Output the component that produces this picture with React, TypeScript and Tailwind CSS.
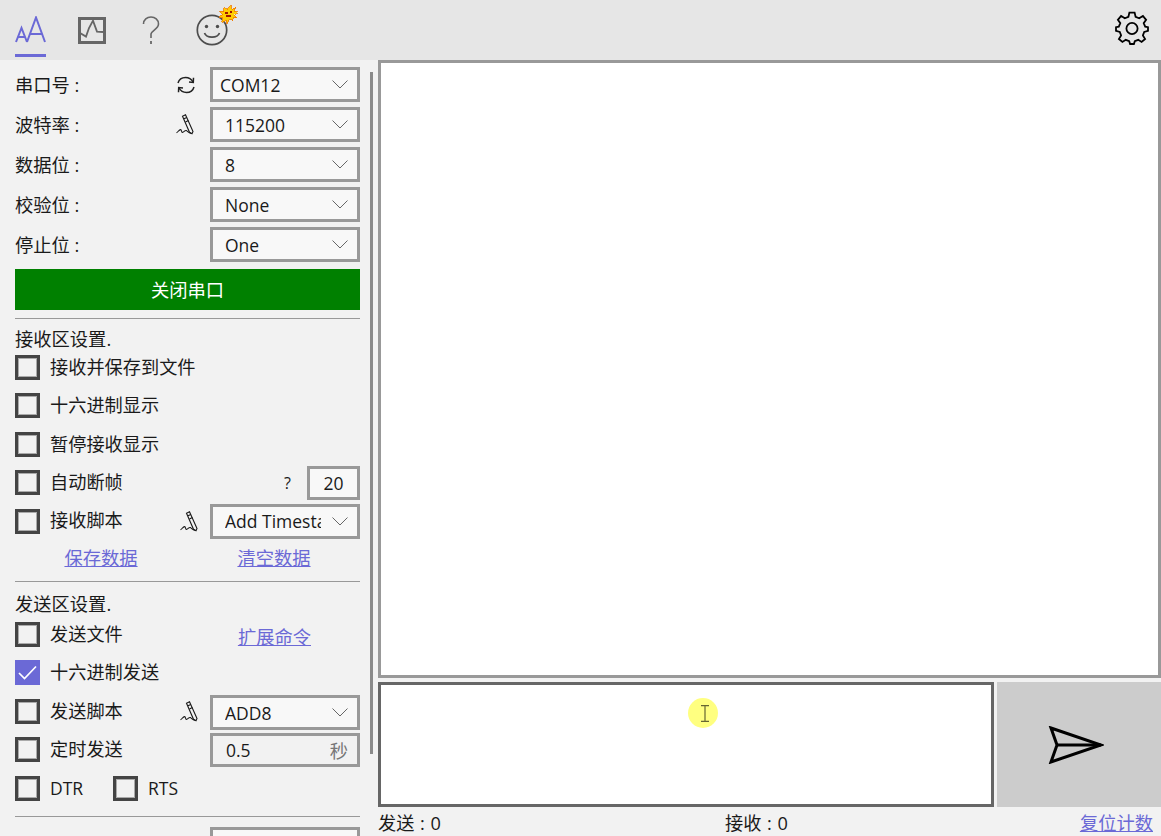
import React from "react";

const FONT = { fontFamily: '"Open Sans","Noto Sans CJK SC",sans-serif' };

function Chevron() {
  return (
    <svg width="16" height="9" viewBox="0 0 16 9" className="shrink-0" fill="none" stroke="#666" strokeWidth="1">
      <path d="M0.5 0.5 L8 8 L15.5 0.5" />
    </svg>
  );
}

function Pen() {
  return (
    <svg width="18" height="21" viewBox="0 0 18 21" fill="none" stroke="#1a1a1a" strokeWidth="1.1" className="shrink-0">
      <path d="M6.5 2.2 L9.5 0.8 L17 17.5 L16 19.8 L13.5 18.3 Z" />
      <path d="M8 4.8 L10.8 3.4 M9.5 8 L12.4 6.6" />
      <path d="M0.5 18.8 C2 18 3 15.8 4.5 15.6 C6 15.4 5 18.6 6.5 18.4 C8 18.1 9 15.8 10.5 16.6 C11.5 17.2 12.5 19 15.5 19.5" />
    </svg>
  );
}

function Refresh() {
  return (
    <svg width="20" height="20" viewBox="0 0 20 20" fill="none" stroke="#222" strokeWidth="1.5" className="shrink-0">
      <path d="M2 8 C3 4.5 6 2.5 9.5 2.5 C13 2.5 15.5 4.2 17 7" />
      <path d="M17.5 2.8 L17.3 7.4 L13 7" />
      <path d="M18 12 C17 15.5 14 17.5 10.5 17.5 C7 17.5 4.5 15.8 3 13" />
      <path d="M2.5 17.2 L2.7 12.6 L7 13" />
    </svg>
  );
}

function Select({ value, wide, pad = "pl-[12px]" }: { value: string; wide?: boolean; pad?: string }) {
  return (
    <div className={`w-[150px] h-[35px] shrink-0 border-[3px] border-[#999999] bg-[#f8f8f8] flex items-center ${pad} pr-[9px]`}>
      <span className={`${wide ? "w-[96px]" : "flex-1"} overflow-hidden whitespace-nowrap text-[17.5px] leading-[24px] text-[#1a1a1a]`}>{value}</span>
      {wide ? <span className="flex-1" /> : null}
      <Chevron />
    </div>
  );
}

function FieldRow({ label, icon, value, pad, iconGap = "mr-[14px]" }: { label: string; icon?: React.ReactNode; value: string; pad?: string; iconGap?: string }) {
  return (
    <div className="flex items-center h-[35px]">
      <span className="text-[18.3px] text-[#1a1a1a] whitespace-pre">{label}</span>
      <span className="flex-1" />
      <span className={`${iconGap} flex items-center`}>{icon}</span>
      <Select value={value} pad={pad} />
    </div>
  );
}

function Box({ checked }: { checked?: boolean }) {
  if (checked) {
    return (
      <span className="w-[25px] h-[25px] shrink-0 bg-[#6b69d6] flex items-center justify-center">
        <svg width="19" height="15" viewBox="0 0 19 15" fill="none" stroke="#fff" strokeWidth="1.7">
          <path d="M1 8 L6.5 13.5 L18 1.5" />
        </svg>
      </span>
    );
  }
  return <span className="w-[25px] h-[25px] shrink-0 border-[3px] border-[#444444] shadow-[inset_0_0_0_1px_#aaaaaa] bg-[#f2f2f2]" />;
}

function Check({ label, checked, children }: { label: string; checked?: boolean; children?: React.ReactNode }) {
  return (
    <div className="flex items-center h-[25px]">
      <Box checked={checked} />
      <span className="ml-[10px] text-[18.2px] text-[#1a1a1a] whitespace-nowrap">{label}</span>
      <span className="flex-1" />
      {children}
    </div>
  );
}

function Link({ children, className = "" }: { children: React.ReactNode; className?: string }) {
  return <a className={`text-[18.3px] text-[#6b69d6] underline whitespace-nowrap ${className}`}>{children}</a>;
}

function TopBar() {
  return (
    <div className="h-[60px] bg-[#e6e6e6] flex items-start relative shrink-0">
      <div className="ml-[15px] w-[31px] h-[57px] border-b-[3px] border-[#6b69d6] pt-[16px]">
        <svg width="31" height="28" viewBox="0 0 31 28" fill="none" stroke="#6b69d6" strokeWidth="2">
          <path d="M1 26 L6.5 12 L12 26 M3.2 21 H10" />
          <path d="M12 26 L21 1.5 L30 26 M15.5 18 H27" />
        </svg>
      </div>
      <svg width="28" height="27" viewBox="0 0 28 27" fill="none" className="ml-[32px] mt-[17px]">
        <rect x="1.5" y="1.5" width="25" height="24" stroke="#666" strokeWidth="3" />
        <path d="M2 16 L8 19.6 L11 11 L15 3.6 L19 14.6 L25 15" stroke="#666" strokeWidth="1.8" />
      </svg>
      <svg width="18" height="30" viewBox="0 0 18 30" fill="none" stroke="#666" strokeWidth="1.6" className="ml-[36px] mt-[16px]">
        <path d="M1.5 8 C1.5 3.5 5 1 9 1 C13 1 16.5 3.5 16.5 8 C16.5 13 10 14 9 18 L9 22" />
        <path d="M9 25 V28" strokeWidth="1.8" />
      </svg>
      <div className="ml-[36px] mt-[14px] relative w-[32px] h-[32px]">
        <svg width="32" height="32" viewBox="0 0 32 32" fill="none" stroke="#4d4d4d" strokeWidth="1.7">
          <circle cx="16" cy="16" r="14.7" />
          <circle cx="10.5" cy="12.5" r="1.7" fill="#4d4d4d" stroke="none" />
          <circle cx="21.5" cy="12.5" r="1.7" fill="#4d4d4d" stroke="none" />
          <path d="M8.5 19 C10.5 24.5 21.5 24.5 23.5 19" />
        </svg>
        <svg width="19" height="19" viewBox="0 0 19 19" className="absolute left-[23px] top-[-9px]" shapeRendering="crispEdges">
          <path d="M12 0 L12.5 4 L17 2 L15 6 L19 7 L15.5 9.5 L18 13 L14 12.5 L13.5 16 L10.5 14 L8 19 L7 15 L2.5 17 L4 13 L0 12 L3.5 9.5 L0.5 6 L5 6.5 L4.5 2.5 L8 4.5 Z" fill="#ffcc00" stroke="#f07800" strokeWidth="0.8" />
          <path d="M6 8 H9 M11 7 H13 M7 11 H12" stroke="#a01800" strokeWidth="1.3" />
        </svg>
      </div>
      <span className="flex-1" />
      <svg width="34" height="34" viewBox="0 0 34 34" fill="none" stroke="#000" strokeWidth="1.8" className="mr-[12px] mt-[11px]">
        <path d="M14.4 1.6 H19.6 L20.6 5.8 L24.2 7.3 L27.9 5 L31.1 8.8 L28.7 12.1 L30.2 15.6 L33 16.2 V19.8 L29.2 21 L27.9 24.4 L30.1 28 L26.6 31 L23.2 28.8 L19.8 30.2 L18.9 33 H15.1 L14.2 30.2 L10.8 28.8 L7.4 31 L3.9 28 L6.1 24.4 L4.8 21 L1 19.8 V16.2 L3.8 15.6 L5.3 12.1 L2.9 8.8 L6.1 5 L9.8 7.3 L13.4 5.8 Z" />
        <circle cx="17" cy="17.5" r="5.6" />
      </svg>
    </div>
  );
}

function Sidebar() {
  return (
    <div className="w-[375px] shrink-0 relative overflow-hidden pl-[15px] pr-[15px]">
      <div className="flex flex-col gap-[5px] pt-[7px]">
        <FieldRow label="串口号 :" icon={<Refresh />} value="COM12" pad="pl-[7px]" />
        <FieldRow label="波特率 :" icon={<Pen />} value="115200" iconGap="mr-[16px]" />
        <FieldRow label="数据位 :" value="8" />
        <FieldRow label="校验位 :" value="None" />
        <FieldRow label="停止位 :" value="One" />
      </div>
      <div className="mt-[7px] h-[41px] pt-[1px] bg-[#008000] text-white text-[18.3px] flex items-center justify-center">关闭串口</div>
      <div className="mt-[8px] h-px bg-[#999999]" />
      <div className="mt-[9px] h-[22px] text-[18.3px] leading-[22px] text-[#1a1a1a]">接收区设置.</div>
      <div className="mt-[5px] flex flex-col gap-[13.4px]">
        <Check label="接收并保存到文件" />
        <Check label="十六进制显示" />
        <Check label="暂停接收显示" />
        <Check label="自动断帧">
          <span className="text-[16px] text-[#1a1a1a] mr-[16px]">?</span>
          <span className="w-[53px] h-[34px] border-[3px] border-[#999999] bg-[#f8f8f8] flex items-center justify-center text-[17.5px] text-[#1a1a1a]">20</span>
        </Check>
        <Check label="接收脚本">
          <span className="mr-[12px] flex"><Pen /></span>
          <Select value="Add Timestamp" wide />
        </Check>
      </div>
      <div className="mt-[11px] h-[26px] flex items-center">
        <span className="w-[173px] text-center"><Link className="mr-[1px]">保存数据</Link></span>
        <span className="w-[172px] text-center"><Link>清空数据</Link></span>
      </div>
      <div className="mt-[10px] h-px bg-[#999999]" />
      <div className="mt-[11px] h-[22px] text-[18.3px] leading-[22px] text-[#1a1a1a]">发送区设置.</div>
      <div className="mt-[7.5px] flex flex-col gap-[13.4px]">
        <Check label="发送文件">
          <Link className="mr-[49px] mt-[4px]">扩展命令</Link>
        </Check>
        <Check label="十六进制发送" checked />
        <Check label="发送脚本">
          <span className="mr-[12px] flex"><Pen /></span>
          <div className="mt-[3px]"><Select value="ADD8" /></div>
        </Check>
        <Check label="定时发送">
          <div className="w-[150px] h-[34px] mt-[1px] border-[3px] border-[#999999] bg-[#f2f2f2] flex items-center pl-[13px] pr-[9px] text-[17.5px] text-[#1a1a1a]">
            <span className="flex-1">0.5</span>
            <span className="text-[#777777] text-[18.3px]">秒</span>
          </div>
        </Check>
        <div className="flex items-center h-[25px]">
          <Box />
          <span className="ml-[10px] w-[63px] text-[17.5px] text-[#1a1a1a]">DTR</span>
          <Box />
          <span className="ml-[10px] text-[17.5px] text-[#1a1a1a]">RTS</span>
        </div>
      </div>
      <div className="mt-[15.5px] h-px bg-[#999999]" />
      <div className="mt-[10px] flex justify-end">
        <div className="w-[150px] h-[35px] border-[3px] border-[#999999] bg-[#f8f8f8]" />
      </div>
      <div className="absolute left-[370px] top-[12px] w-[3px] h-[682px] bg-[#8a8a8a]" />
    </div>
  );
}

function Main() {
  return (
    <div className="flex-1 min-w-0 min-h-0 flex flex-col pl-[3px]">
      <div className="h-[618px] shrink-0 border-[3px] border-[#999999] bg-white" />
      <div className="mt-[4px] h-[125px] shrink-0 flex gap-[3px]">
        <div className="w-[616px] border-[3px] border-[#666666] bg-white relative">
          <div className="absolute left-[307px] top-[13px] w-[30px] h-[30px] rounded-full bg-[#ffff80] flex items-center justify-center">
            <svg width="10" height="17" viewBox="0 0 10 17" fill="none" stroke="#666633" strokeWidth="1.2" className="ml-[4px] mt-[1px]">
              <path d="M1 0.7 H9 M1 16.3 H9 M5 0.7 V16.3" />
            </svg>
          </div>
        </div>
        <div className="flex-1 bg-[#cccccc] flex items-center justify-center pr-[6px]">
          <svg width="56" height="38" viewBox="0 0 56 38" fill="none" stroke="#000" strokeWidth="3" strokeLinejoin="miter">
            <path d="M3 2 L53 19 L3 36 L9 19 Z" />
            <path d="M9 19 H53" />
          </svg>
        </div>
      </div>
      <div className="h-[29px] shrink-0 flex items-center text-[#1a1a1a] text-[18.2px] leading-[24px] whitespace-pre pt-[3px] [word-spacing:1px]">
        <span className="w-[347px]">发送 : 0</span>
        <span>接收 : 0</span>
        <span className="flex-1" />
        <Link className="mr-[8px] leading-[24px]">复位计数</Link>
      </div>
    </div>
  );
}

export default function App() {
  return (
    <div className="w-[1161px] h-[836px] overflow-hidden flex flex-col bg-[#f2f2f2]" style={FONT}>
      <TopBar />
      <div className="flex-1 min-h-0 flex">
        <Sidebar />
        <Main />
      </div>
    </div>
  );
}
